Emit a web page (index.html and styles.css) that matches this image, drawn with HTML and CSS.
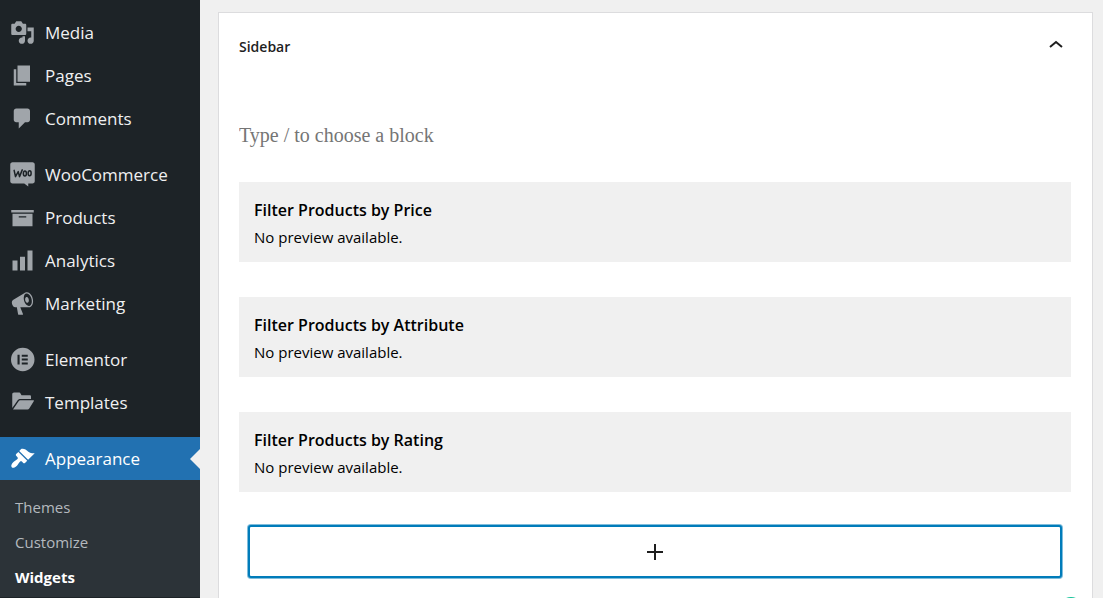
FILE: index.html
```html
<!DOCTYPE html>
<html lang="en">
<head>
    <meta charset="UTF-8">
    <meta name="viewport" content="width=device-width, initial-scale=1.0">
    <title>Widgets</title>
    <link rel="stylesheet" href="styles.css">
</head>
<body>
    <div class="admin">
        <nav class="menu" aria-label="Main menu">
            <ul class="menu-group">
                <li><a class="menu-link" href="#">
                    <svg class="menu-icon" viewBox="0 0 20 20"><path d="M13 11V4c0-.55-.45-1-1-1h-1.670L9 1H5L3.670 3H2c-.55 0-1 .45-1 1v7c0 .55.45 1 1 1h10c.55 0 1-.45 1-1zM7 4.500c1.380 0 2.500 1.120 2.500 2.500S8.380 9.500 7 9.500 4.500 8.380 4.500 7 5.620 4.500 7 4.500zM14 6h5v10.500c0 1.380-1.120 2.500-2.500 2.500S14 17.880 14 16.500s1.120-2.500 2.500-2.500c.17 0 .34.02.5.05V9h-3V6zm-4 8.050V13h2v3.500c0 1.380-1.120 2.500-2.500 2.500S7 17.880 7 16.500 8.120 14 9.500 14c.17 0 .34.02.5.05z"/></svg>
                    Media</a></li>
                <li><a class="menu-link" href="#">
                    <svg class="menu-icon" viewBox="0 0 20 20"><path d="M6 15V2h10v13H6zm-1 1h8v2H3V5h2v11z"/></svg>
                    Pages</a></li>
                <li><a class="menu-link" href="#">
                    <svg class="menu-icon" viewBox="0 0 20 20"><path d="M5 2h9c1.100 0 2 .9 2 2v7c0 1.100-.9 2-2 2h-2l-5 5v-5H5c-1.100 0-2-.9-2-2V4c0-1.100.9-2 2-2z"/></svg>
                    Comments</a></li>
            </ul>
            <ul class="menu-group">
                <li><a class="menu-link" href="#">
                    <svg class="menu-icon" viewBox="0 0 20 20">
                        <path d="M2 .2h16c1 0 1.800.8 1.800 1.800v13.400c0 1-.8 1.800-1.800 1.800h-3.400v2.400l-3.200-2.400H2c-1 0-1.800-.8-1.800-1.800V2C.2 1 1 .2 2 .2z"/>
                        <g class="icon-line"><path d="M3.300 6.700l1.100 5 2.200-4 1 4 2.200-5.400"/><ellipse cx="11.900" cy="9.200" rx="1.200" ry="2"/><ellipse cx="15.700" cy="8.900" rx="1.200" ry="2"/></g>
                    </svg>
                    WooCommerce</a></li>
                <li><a class="menu-link" href="#">
                    <svg class="menu-icon" viewBox="0 0 20 20"><path d="M19 4v2H1V4h18zM2 7h16v10H2V7zm11 3V9H7v1h6z"/></svg>
                    Products</a></li>
                <li><a class="menu-link" href="#">
                    <svg class="menu-icon" viewBox="0 0 20 20"><path d="M18 18V2h-4v16h4zm-6 0V7H8v11h4zm-6 0v-8H2v8h4z"/></svg>
                    Analytics</a></li>
                <li><a class="menu-link" href="#">
                    <svg class="menu-icon" viewBox="0 0 20 20"><path d="M18.150 5.940c.46 1.620.38 3.220-.02 4.480-.42 1.280-1.260 2.180-2.300 2.480-.16.06-.26.06-.4.06-.06.02-.12.02-.18.02-.06.02-.14.02-.22.02h-6.800l2.220 5.500c.02.14-.06.26-.14.34-.08.1-.24.16-.34.16H6.950c-.1 0-.26-.06-.34-.16-.08-.08-.16-.2-.14-.34l-1-5.500H4.250l-.02-.02c-.5.06-1.080-.18-1.540-.62s-.88-1.080-1.060-1.880c-.24-.8-.2-1.560-.02-2.200.18-.62.58-1.080 1.060-1.300l.02-.02 9-5.400c.1-.06.18-.1.24-.16.06-.04.14-.08.24-.12.16-.08.28-.12.5-.18 1.040-.3 2.240.1 3.220.98s1.840 2.240 2.260 3.860zm-2.580 5.980h-.02c.4-.1.74-.34 1.040-.7.58-.7.86-1.760.86-3.040 0-.64-.1-1.300-.28-1.980-.34-1.360-1.020-2.500-1.780-3.240s-1.680-1.100-2.460-.88c-.82.22-1.400.96-1.700 2-.32 1.040-.28 2.360.06 3.720.38 1.360 1 2.500 1.800 3.240.78.74 1.620 1.100 2.480.88zm-2.540-7.080c.22-.04.42-.02.62.04.38.16.76.48 1.020 1s.42 1.200.42 1.780c0 .3-.04.56-.12.8-.18.48-.44.84-.86.94-.34.1-.8-.06-1.140-.4s-.64-.86-.78-1.500c-.18-.62-.12-1.240.02-1.720s.48-.84.82-.94z"/></svg>
                    Marketing</a></li>
            </ul>
            <ul class="menu-group">
                <li><a class="menu-link" href="#">
                    <svg class="menu-icon" viewBox="0 0 20 20"><path fill-rule="evenodd" d="M10.200.6a9.400 9.400 0 1 0 0 18.800 9.400 9.400 0 0 0 0-18.800zM6 6.100h1.700v7.800H6zM9.400 6.100h4.800v1.600H9.400zM9.400 9.200h4.800v1.600H9.400zM9.400 12.300h4.800v1.600H9.400z"/></svg>
                    Elementor</a></li>
                <li><a class="menu-link" href="#">
                    <svg class="menu-icon" viewBox="0 0 20 20"><path d="M3.200 2h4.200c.5 0 .8.3 1 .7l.8 1.500h6.600c.6 0 1 .4 1 1v2H8.200c-1 0-1.700.4-2.200 1.200l-4.200 6V3.400C1.800 2.600 2.400 2 3.200 2zM8.200 8.200h10.400c.5 0 .7.4.4.8l-3.600 5.800c-.3.500-.8.7-1.400.7H2.400l4.500-6.600c.3-.5.7-.7 1.300-.7z"/></svg>
                    Templates</a></li>
            </ul>
            <ul class="menu-group">
                <li>
                    <a class="menu-link current" href="#">
                        <svg class="menu-icon" viewBox="0 0 20 20"><path d="M14.480 11.060L7.410 3.990l1.500-1.500c.5-.56 2.300-.47 3.510.32 1.210.8 1.430 1.280 2.910 2.100 1.180.64 2.450 1.260 4.450.85zm-.71.71L6.700 4.700 4.930 6.470c-.39.39-.39 1.020 0 1.410l1.060 1.060c.39.39.39 1.030 0 1.420-.6.6-1.430 1.110-2.210 1.690-.35.26-.7.53-1.010.84C1.430 14.230.4 16.080 1.400 17.070c.99 1 2.840-.03 4.180-1.360.31-.31.58-.66.85-1.020.57-.78 1.080-1.610 1.690-2.210.39-.39 1.020-.39 1.410 0l1.060 1.060c.39.39 1.020.39 1.410 0z"/></svg>
                        Appearance</a>
                    <ul class="submenu">
                        <li><a href="#">Themes</a></li>
                        <li><a href="#">Customize</a></li>
                        <li><a class="active" href="#" aria-current="page">Widgets</a></li>
                    </ul>
                </li>
            </ul>
        </nav>

        <main class="content">
            <section class="panel">
                <h2 class="panel-title">
                    <button class="panel-toggle" type="button" aria-expanded="true">
                        Sidebar
                        <svg class="chevron" viewBox="0 0 24 24"><path d="M6 13l6-5 6 5"/></svg>
                    </button>
                </h2>

                <input class="block-prompt" type="text" placeholder="Type / to choose a block" aria-label="Add a block">

                <div class="widgets">
                    <article class="widget">
                        <h3>Filter Products by Price</h3>
                        <p>No preview available.</p>
                    </article>
                    <article class="widget">
                        <h3>Filter Products by Attribute</h3>
                        <p>No preview available.</p>
                    </article>
                    <article class="widget">
                        <h3>Filter Products by Rating</h3>
                        <p>No preview available.</p>
                    </article>
                </div>

                <button class="add-block" type="button" aria-label="Add block">
                    <svg viewBox="0 0 16 16"><path d="M8 0v16M0 8h16"/></svg>
                </button>
                <span class="status-dot"></span>
            </section>
        </main>
    </div>
</body>
</html>
```

FILE: styles.css
```css
* {
    margin: 0;
    padding: 0;
    box-sizing: border-box;
}

body {
    font-family: "Segoe UI", "Open Sans", "Noto Sans", sans-serif;
    background-color: #f0f0f0;
    color: #1e1e1e;
}

.admin {
    display: flex;
    height: 100vh;
    overflow: hidden;
}

/* Left menu */
.menu {
    flex: 0 0 200px;
    background-color: #1d2327;
    padding-top: 11px;
}

.menu ul {
    list-style: none;
}

.menu-group {
    margin-bottom: 13px;
}

.menu-link {
    display: flex;
    align-items: center;
    gap: 10px;
    height: 43px;
    padding-left: 10px;
    color: #f0f0f1;
    font-size: 17px;
    text-decoration: none;
}

.menu-icon {
    width: 25px;
    height: 25px;
    fill: #a0a5aa;
}

.icon-line {
    fill: none;
    stroke: #1d2327;
    stroke-width: 1.2;
    stroke-linecap: round;
    stroke-linejoin: round;
}

.current {
    position: relative;
    background-color: #2271b1;
    color: #fff;
}

.current .menu-icon {
    fill: #fff;
}

.current::after {
    content: "";
    position: absolute;
    top: 12px;
    right: 0;
    border: 10px solid transparent;
    border-right-color: #f0f0f0;
    border-left: none;
}

.submenu {
    background-color: #2c3338;
    padding: 10px 0 2px;
}

.submenu a {
    display: block;
    padding-left: 15px;
    color: #b4b9be;
    font-size: 15px;
    line-height: 35px;
    text-decoration: none;
}

.submenu .active {
    color: #fff;
    font-weight: 700;
}

/* Widget area */
.content {
    flex: 1;
    min-width: 0;
    padding: 12px 10px 0 18px;
}

.panel {
    display: flex;
    flex-direction: column;
    min-height: 100%;
    padding: 0 21px 0 20px;
    background-color: #fff;
    border: 1px solid #dcdcde;
}

.panel-toggle {
    display: flex;
    align-items: center;
    justify-content: space-between;
    width: 100%;
    height: 66px;
    padding-right: 3px;
    background: none;
    border: none;
    color: #1e1e1e;
    font-family: inherit;
    font-size: 14px;
    font-weight: 600;
    cursor: pointer;
}

.chevron {
    width: 24px;
    height: 24px;
    fill: none;
    stroke: #1e1e1e;
    stroke-width: 2;
}

.block-prompt {
    height: 40px;
    margin: 36px 0 27px;
    border: none;
    outline: none;
    background: none;
    font-family: "Liberation Serif", "Times New Roman", serif;
    font-size: 20px;
}

.block-prompt::placeholder {
    color: #757575;
    opacity: 1;
}

.widgets {
    display: grid;
    gap: 35px;
}

.widget {
    height: 80px;
    padding: 14px 15px;
    background-color: #f0f0f0;
    color: #000;
}

.widget h3 {
    font-size: 16px;
    font-weight: 600;
    line-height: 28px;
}

.widget p {
    font-size: 15px;
    line-height: 26px;
}

.add-block {
    display: flex;
    align-items: center;
    justify-content: center;
    height: 53px;
    margin: 33px 9px 19px;
    background-color: #fff;
    border: 2px solid #007cba;
    border-radius: 3px;
    box-shadow: 0 0 0 1px rgba(0, 124, 186, 0.5);
    cursor: pointer;
}

.add-block svg {
    width: 16px;
    height: 16px;
    stroke: #1e1e1e;
    stroke-width: 2;
}

.status-dot {
    align-self: flex-end;
    width: 24px;
    height: 24px;
    margin-right: -12px;
    border-radius: 50%;
    background-color: #15c39a;
}
```
